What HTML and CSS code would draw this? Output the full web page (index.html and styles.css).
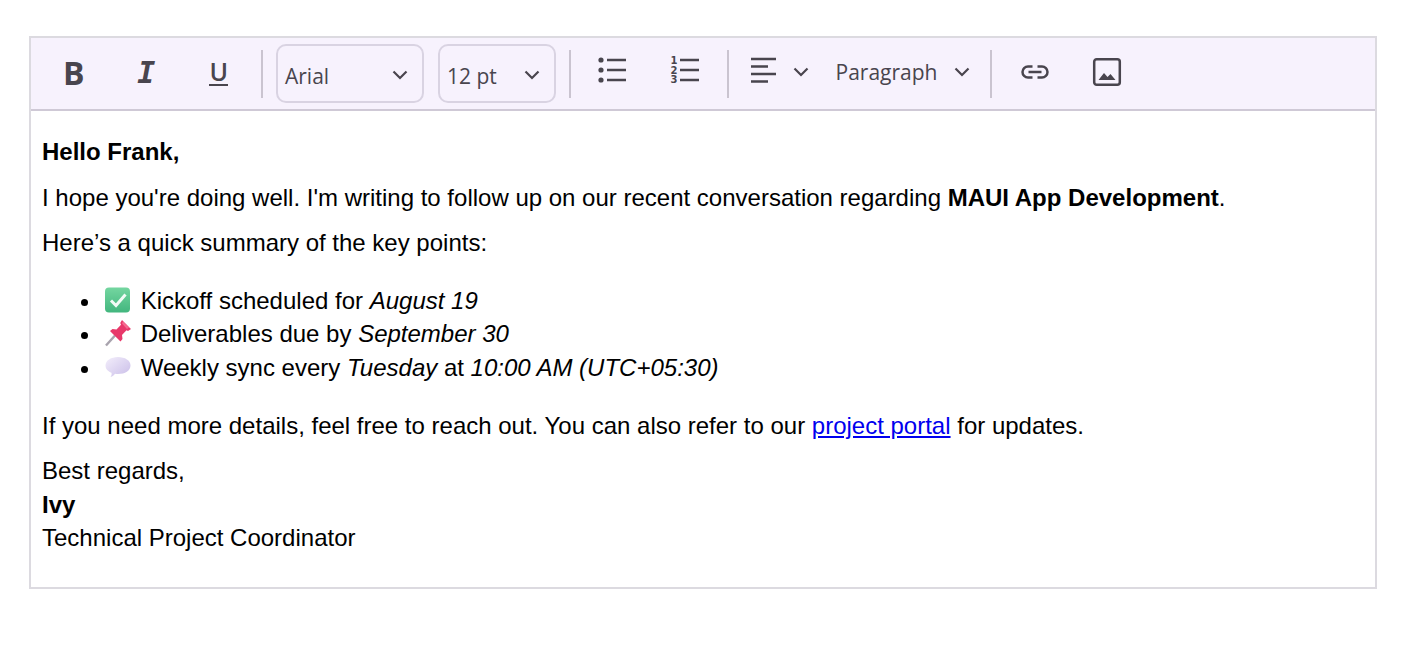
FILE: index.html
```html
<!DOCTYPE html>
<html lang="en">
<head>
    <meta charset="UTF-8">
    <title>Rich Text Editor</title>
    <link rel="stylesheet" href="styles.css">
</head>
<body>
    <div class="editor">
        <div class="toolbar">
            <button class="tool tool-text tool-bold">B</button>
            <button class="tool tool-text tool-italic">I</button>
            <button class="tool tool-text tool-underline"><span>U</span></button>
            <span class="sep sep-first"></span>
            <div class="select select-font">
                <span>Arial</span>
                <svg class="chevron" viewBox="0 0 16 10"><path d="M1.500 1.500 8 8l6.500-6.500"/></svg>
            </div>
            <div class="select select-size">
                <span>12 pt</span>
                <svg class="chevron" viewBox="0 0 16 10"><path d="M1.500 1.500 8 8l6.500-6.500"/></svg>
            </div>
            <span class="sep sep-after-size"></span>
            <button class="tool">
                <svg class="icon" viewBox="0 0 32 32">
                    <circle cx="5" cy="4" r="2.600" class="fill"/>
                    <circle cx="5" cy="14" r="2.600" class="fill"/>
                    <circle cx="5" cy="24" r="2.600" class="fill"/>
                    <path d="M11 4h19M11 14h19M11 24h19"/>
                </svg>
            </button>
            <button class="tool">
                <svg class="icon" viewBox="0 0 32 32">
                    <text x="1.500" y="8" class="num">1</text>
                    <text x="1.500" y="17.500" class="num">2</text>
                    <text x="1.500" y="27" class="num">3</text>
                    <path d="M11 4h19M11 14h19M11 24h19"/>
                </svg>
            </button>
            <span class="sep sep-after-lists"></span>
            <button class="tool tool-align">
                <svg class="icon" viewBox="0 0 32 32">
                    <path d="M3 3h25M3 10.500h17M3 18h25M3 25.500h17"/>
                </svg>
                <svg class="chevron" viewBox="0 0 16 10"><path d="M1.500 1.500 8 8l6.500-6.500"/></svg>
            </button>
            <div class="paragraph">
                <span>Paragraph</span>
                <svg class="chevron" viewBox="0 0 16 10"><path d="M1.500 1.500 8 8l6.500-6.500"/></svg>
            </div>
            <span class="sep sep-after-paragraph"></span>
            <button class="tool">
                <svg class="icon" viewBox="0 0 32 32">
                    <path d="M13.500 10.500H9a5.500 5.500 0 0 0 0 11h4.500M18.500 10.500H23a5.500 5.500 0 0 1 0 11h-4.500M9.500 16h13"/>
                </svg>
            </button>
            <button class="tool">
                <svg class="icon" viewBox="0 0 32 32">
                    <rect x="3.200" y="3.200" width="25.600" height="25.600" rx="2.500"/>
                    <path class="fill" d="M7.500 24l5.500-7 3.500 4 3-3 5 6z"/>
                </svg>
            </button>
        </div>
        <div class="content">
            <p><strong>Hello Frank,</strong></p>
            <p>I hope you're doing well. I'm writing to follow up on our recent conversation regarding <strong>MAUI App Development</strong>.</p>
            <p>Here’s a quick summary of the key points:</p>
            <ul>
                <li>
                    <svg class="emoji" viewBox="0 0 32 32">
                        <defs>
                            <linearGradient id="boxGrad" x1="0" y1="0" x2="0" y2="1">
                                <stop offset="0" stop-color="#74d6a0"/>
                                <stop offset="1" stop-color="#42b67e"/>
                            </linearGradient>
                        </defs>
                        <rect x="3" y="3.500" width="25" height="25" rx="4" fill="url(#boxGrad)"/>
                        <path d="M9 16.500l5 5 9.500-11" fill="none" stroke="#f2fbf6" stroke-width="3"/>
                    </svg> Kickoff scheduled for <em>August 19</em>
                </li>
                <li>
                    <svg class="emoji" viewBox="0 0 32 32">
                        <path d="M4 28.500l9-10" stroke="#a8a3ad" stroke-width="2.400" fill="none"/>
                        <path d="M20 3l9 9-3 2-1.500-.8-4.500 4.800.5 4-2 2.500L8 14l2.500-2 4 .5 4.500-4.800-.8-1.700z" fill="#e8386a"/>
                        <path d="M21 4.500l6 6-2 1.500-5-5.500z" fill="#f56a8f"/>
                    </svg> Deliverables due by <em>September 30</em>
                </li>
                <li>
                    <svg class="emoji" viewBox="0 0 32 32">
                        <defs>
                            <linearGradient id="bubbleGrad" x1="0" y1="0" x2="1" y2="1">
                                <stop offset="0" stop-color="#f3eefb"/>
                                <stop offset="1" stop-color="#c9bde8"/>
                            </linearGradient>
                        </defs>
                        <path d="M16 6c7 0 12.500 3.500 12.500 8.500S23 23 16 23c-1 0-2 0-3-.2-1 1.500-2.500 3-4.500 3.200 1-1.200 1.300-2.600 1-4.300C6 20.500 3.500 18 3.500 14.500 3.500 9.500 9 6 16 6z" fill="url(#bubbleGrad)"/>
                    </svg> Weekly sync every <em>Tuesday</em> at <em>10:00 AM (UTC+05:30)</em>
                </li>
            </ul>
            <p>If you need more details, feel free to reach out. You can also refer to our <a href="#">project portal</a> for updates.</p>
            <p>Best regards,<br><strong>Ivy</strong><br>Technical Project Coordinator</p>
        </div>
    </div>
</body>
</html>
```

FILE: styles.css
```css
body {
    margin: 0;
    background: white;
    font-family: "Liberation Sans", Arial, sans-serif;
}

.editor {
    margin: 36px 50px 0 29px;
    height: 553px;
    box-sizing: border-box;
    border: 2px solid #dcdae0;
    background: white;
}

.toolbar {
    display: flex;
    align-items: center;
    box-sizing: border-box;
    height: 73px;
    padding-left: 6.500px;
    background: #f7f2fd;
    border-bottom: 2px solid #cfc9d6;
    color: #49454e;
    font-family: "Open Sans", sans-serif;
}

.tool {
    display: flex;
    align-items: center;
    justify-content: center;
    flex: none;
    width: 72.500px;
    height: 71px;
    padding: 0 0 3px;
    border: none;
    background: none;
    color: #49454e;
}

.tool-text {
    font-family: "Open Sans", sans-serif;
    font-weight: 700;
}

.tool-bold {
    font-size: 32px;
}

.tool-italic {
    font-family: "DejaVu Sans Mono", monospace;
    font-style: italic;
    font-size: 30px;
}

.tool-underline {
    font-size: 25px;
    font-weight: 600;
}

.tool-underline span {
    display: block;
    line-height: 25px;
    border-bottom: 2.500px solid #49454e;
}

.sep {
    flex: none;
    width: 2px;
    height: 48px;
    background: #cac4d0;
}

.sep-first {
    margin: 0 13px 0 6px;
}

.sep-after-size {
    margin: 0 5px 0 13px;
}

.sep-after-lists {
    margin: 0 19px 0 5.500px;
}

.sep-after-paragraph {
    margin: 0 6px 0 0;
}

.select {
    display: flex;
    align-items: center;
    justify-content: space-between;
    flex: none;
    box-sizing: border-box;
    height: 59px;
    margin-right: 14px;
    padding: 2px 14px 0 7px;
    border: 2px solid #d9d3e2;
    border-radius: 10px;
    font-size: 21px;
}

.select-font {
    width: 148px;
}

.select-size {
    width: 118px;
    margin-right: 0;
}

.select span {
    position: relative;
    top: 1px;
}

.chevron {
    flex: none;
    width: 16px;
    height: 10px;
    fill: none;
    stroke: #49454e;
    stroke-width: 2.200;
}

.icon {
    width: 32px;
    height: 32px;
    fill: none;
    stroke: #49454e;
    stroke-width: 2.500;
}

.icon .fill {
    fill: #49454e;
    stroke: none;
}

.icon .num {
    fill: #49454e;
    stroke: none;
    font-family: "DejaVu Sans", sans-serif;
    font-size: 10px;
    font-weight: 700;
}

.tool-align {
    width: auto;
    gap: 13px;
}

.paragraph {
    display: flex;
    align-items: center;
    flex: none;
    gap: 17px;
    margin-left: 27px;
    margin-right: 20px;
    padding-bottom: 3px;
    font-size: 21px;
}

.content {
    padding: 24px 12px 0 11px;
    color: black;
    font-size: 24px;
    line-height: 33.600px;
}

.content p {
    margin: 0 0 12px;
}

.content ul {
    margin: 24px 0;
    padding-left: 60px;
}

.emoji {
    width: 32px;
    height: 32px;
    vertical-align: -7px;
}

.content a {
    color: #0000ee;
}
```
